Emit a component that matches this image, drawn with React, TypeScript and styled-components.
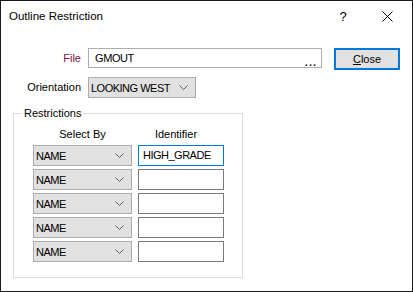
import { Fragment } from 'react';
import styled, { createGlobalStyle } from 'styled-components';

const GlobalStyle = createGlobalStyle`
    html, body {
        margin: 0;
        padding: 0;
        background: #ffffff;
    }
    body {
        font-family: "Liberation Sans", Arial, sans-serif;
        font-size: 11px;
        color: #000000;
    }
`;

const Window = styled.div`
    width: 413px;
    height: 292px;
    box-sizing: border-box;
    border: 1px solid #1a1a1a;
    background: #ffffff;
    display: flex;
    flex-direction: column;
`;

const TitleBar = styled.div`
    height: 30px;
    display: flex;
    align-items: center;
    padding-left: 8px;
    padding-right: 3px;
`;

const Title = styled.div`
    flex: 1;
    font-size: 11.5px;
    padding-bottom: 1px;
`;

const TitleButton = styled.div`
    width: 44px;
    height: 30px;
    display: flex;
    align-items: center;
    justify-content: center;
    font-size: 13px;
`;

const Body = styled.div`
    display: flex;
    flex-direction: column;
    padding-top: 17px;
`;

const Row = styled.div<{ $top?: number }>`
    display: flex;
    align-items: flex-start;
    margin-top: ${p => p.$top ?? 0}px;
`;

const Label = styled.div<{ $accent?: boolean }>`
    width: 80px;
    margin-right: 7px;
    height: 20px;
    line-height: 20px;
    text-align: right;
    color: ${p => (p.$accent ? '#80103c' : '#000000')};
`;

const FileField = styled.div`
    position: relative;
    width: 234px;
    height: 20px;
    box-sizing: border-box;
    border: 1px solid #adadad;
    padding-left: 6px;
    line-height: 18px;
    letter-spacing: -0.4px;
`;

const Ellipsis = styled.span`
    position: absolute;
    right: 4px;
    bottom: 1px;
    font-weight: bold;
    font-size: 11px;
    line-height: 8px;
    letter-spacing: 1px;
    color: #202020;
`;

const CloseButton = styled.button`
    margin-left: 12px;
    width: 66px;
    height: 22px;
    box-sizing: border-box;
    border: 2px solid #0078d7;
    background: #e1e1e1;
    font-family: inherit;
    font-size: 11px;
    color: #000000;
    padding: 0;
    u {
        text-decoration: underline;
    }
`;

const Combo = styled.div<{ $width: number }>`
    width: ${p => p.$width}px;
    height: 21px;
    box-sizing: border-box;
    border: 1px solid #adadad;
    background: #e1e1e1;
    display: flex;
    align-items: center;
    padding-left: 2px;
    padding-right: 7px;
`;

const ComboText = styled.span`
    flex: 1;
    letter-spacing: -0.5px;
`;

const Group = styled.fieldset`
    margin: 8px 0 0 12px;
    padding: 0;
    width: 230px;
    height: 172px;
    box-sizing: border-box;
    border: 1px solid #dcdcdc;
`;

const Legend = styled.legend`
    margin-left: 8px;
    padding: 0 2px;
    line-height: 14px;
`;

const Grid = styled.div`
    display: grid;
    grid-template-columns: 99px 86px;
    column-gap: 6px;
    row-gap: 3px;
    padding: 7px 0 0 19px;
`;

const Header = styled.div<{ $shift?: number }>`
    text-align: center;
    line-height: 14px;
    padding-right: ${p => p.$shift ?? 0}px;
    margin-bottom: 1px;
`;

const TextBox = styled.div<{ $focused?: boolean }>`
    height: 21px;
    box-sizing: border-box;
    border: 1px solid ${p => (p.$focused ? '#0078d7' : '#7a7a7a')};
    padding-left: 4px;
    line-height: 19px;
    letter-spacing: -0.5px;
`;

const Chevron = () => (
    <svg width="9" height="5" viewBox="0 0 9 5">
        <polyline points="0.5,0.5 4.5,4.5 8.5,0.5" fill="none" stroke="#606060" strokeWidth="1" />
    </svg>
);

const CloseIcon = () => (
    <svg width="11" height="11" viewBox="0 0 11 11">
        <path d="M0.5 0.5 L10.5 10.5 M10.5 0.5 L0.5 10.5" stroke="#000" strokeWidth="1" />
    </svg>
);

const rows = ['HIGH_GRADE', '', '', '', ''];

const App = () => {
    return (
        <>
            <GlobalStyle />
            <Window>
                <TitleBar>
                    <Title>Outline Restriction</Title>
                    <TitleButton>?</TitleButton>
                    <TitleButton>
                        <CloseIcon />
                    </TitleButton>
                </TitleBar>
                <Body>
                    <Row>
                        <Label $accent>File</Label>
                        <FileField>
                            GMOUT
                            <Ellipsis>...</Ellipsis>
                        </FileField>
                        <CloseButton>
                            <u>C</u>lose
                        </CloseButton>
                    </Row>
                    <Row $top={7}>
                        <Label>Orientation</Label>
                        <Combo $width={108}>
                            <ComboText>LOOKING WEST</ComboText>
                            <Chevron />
                        </Combo>
                    </Row>
                    <Group>
                        <Legend>Restrictions</Legend>
                        <Grid>
                            <Header>Select By</Header>
                            <Header $shift={10}>Identifier</Header>
                            {rows.map((value, i) => (
                                <Fragment key={i}>
                                    <Combo $width={99}>
                                        <ComboText>NAME</ComboText>
                                        <Chevron />
                                    </Combo>
                                    <TextBox $focused={i === 0}>{value}</TextBox>
                                </Fragment>
                            ))}
                        </Grid>
                    </Group>
                </Body>
            </Window>
        </>
    );
};

export default App;
